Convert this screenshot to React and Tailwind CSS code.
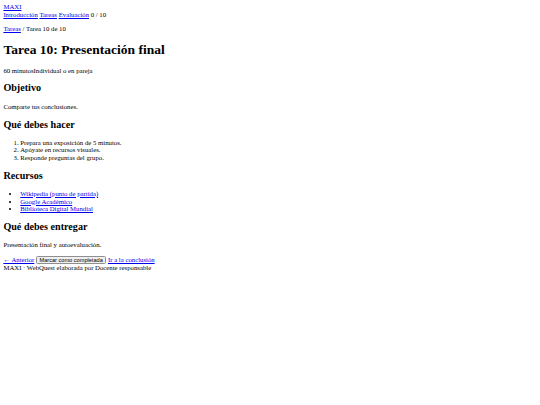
import React from "react";

const link = "text-[#0000ee] underline";

export default function App() {
  const pasos = [
    "Prepara una exposición de 5 minutos.",
    "Apóyate en recursos visuales.",
    "Responde preguntas del grupo.",
  ];
  const recursos = [
    "Wikipedia (punto de partida)",
    "Google Académico",
    "Biblioteca Digital Mundial",
  ];

  return (
    <div className="bg-white text-black min-h-[405px] p-[3.375px] text-[6.75px] leading-[7.6px] font-['Liberation_Serif',serif]">
      <header>
        <div>
          <a href="#" className={link}>MAXI</a>
        </div>
        <nav>
          <a href="#" className={link}>Introducción</a>{" "}
          <a href="#" className={link}>Tareas</a>{" "}
          <a href="#" className={link}>Evaluación</a> <span>0 / 10</span>
        </nav>
      </header>

      <main>
        <p className="my-[6.75px]">
          <a href="#" className={link}>Tareas</a> / Tarea 10 de 10
        </p>

        <h1 className="text-[13.5px] leading-[15.6px] font-bold my-[9px]">Tarea 10: Presentación final</h1>
        <p className="my-[6.75px]">
          <span>60 minutos</span>
          <span>Individual o en pareja</span>
        </p>

        <h2 className="text-[10.125px] leading-[11.7px] font-bold my-[8.4px]">Objetivo</h2>
        <p className="my-[6.75px]">Comparte tus conclusiones.</p>

        <h2 className="text-[10.125px] leading-[11.7px] font-bold my-[8.4px]">Qué debes hacer</h2>
        <ol className="list-decimal pl-[16.875px] my-[6.75px]">
          {pasos.map((p) => (
            <li key={p}>{p}</li>
          ))}
        </ol>

        <h2 className="text-[10.125px] leading-[11.7px] font-bold my-[8.4px]">Recursos</h2>
        <ul className="list-disc pl-[16.875px] my-[6.75px]">
          {recursos.map((r) => (
            <li key={r}>
              <a href="#" className={link}>{r}</a>
            </li>
          ))}
        </ul>

        <h2 className="text-[10.125px] leading-[11.7px] font-bold my-[8.4px]">Qué debes entregar</h2>
        <p className="my-[6.75px]">Presentación final y autoevaluación.</p>

        <div>
          <a href="#" className={link}>← Anterior</a>{" "}
          <button className="bg-[#efefef] border border-[#8f8f8f] rounded-[1.5px] px-[2.5px] py-[0.4px] text-[5.625px] leading-[normal] font-['Liberation_Sans',sans-serif] text-black">
            Marcar como completada
          </button>{" "}
          <a href="#" className={link}>Ir a la conclusión</a>
        </div>
      </main>

      <footer>MAXI · WebQuest elaborada por Docente responsable</footer>
    </div>
  );
}
